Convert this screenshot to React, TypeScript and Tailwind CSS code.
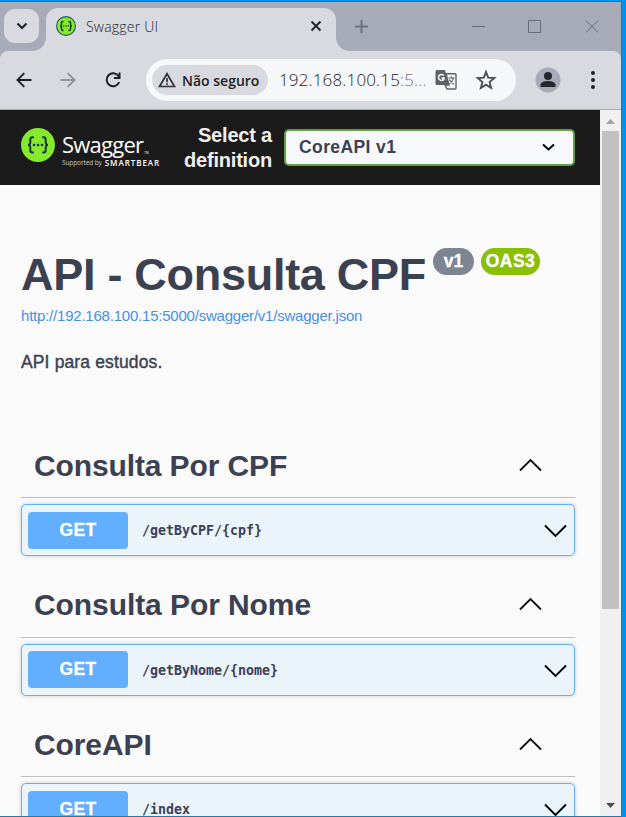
import React from "react";

const sections = [
  { title: "Consulta Por CPF", path: "/getByCPF/{cpf}", spacing: "tracking-[-0.12px]" },
  { title: "Consulta Por Nome", path: "/getByNome/{nome}", spacing: "tracking-[-0.08px]" },
  { title: "CoreAPI", path: "/index", spacing: "tracking-[-0.1px]" },
];

function Braces({ size, ring }: { size: number; ring?: boolean }) {
  return (
    <svg width={size} height={size} viewBox="0 0 34 34" className="shrink-0">
      <circle cx="17" cy="17" r={ring ? 16 : 17} fill="#85ea2d" stroke={ring ? "#2b5b62" : "none"} strokeWidth="2" />
      <g fill="none" stroke="#173647" strokeWidth={ring ? 2.6 : 2}>
        <path d="M12.8 9.2H11.5C9.9 9.2 9.3 10 9.3 11.5V14.3C9.3 16 8.6 16.9 7 16.9C8.6 16.9 9.3 17.8 9.3 19.5V22.3C9.3 23.8 9.9 24.6 11.5 24.6H12.8" />
        <path d="M21.2 9.2H22.5C24.1 9.2 24.7 10 24.7 11.5V14.3C24.7 16 25.4 16.9 27 16.9C25.4 16.9 24.7 17.8 24.7 19.5V22.3C24.7 23.8 24.1 24.6 22.5 24.6H21.2" />
      </g>
      <g fill="#173647">
        <circle cx="13" cy="17" r="1.3" />
        <circle cx="17" cy="17" r="1.3" />
        <circle cx="21" cy="17" r="1.3" />
      </g>
    </svg>
  );
}

function TabStrip() {
  return (
    <div className="flex h-[49px] shrink-0 bg-[#a7abb7]">
      <div className="mt-[7px] ml-1 flex h-[34px] w-[35px] items-center justify-center rounded-[11px] bg-[#d9dadf]">
        <svg width="12" height="8" viewBox="0 0 12 8" fill="none" stroke="#1f2024" strokeWidth="2">
          <path d="M1.5 1.5 6 6l4.5-4.5" />
        </svg>
      </div>
      <svg width="14" height="14" viewBox="0 0 14 14" className="-ml-[7px] self-end">
        <path d="M14 0v14H0C8 14 14 8 14 0Z" fill="#d9dadf" />
      </svg>
      <div className="mt-[6px] flex h-[43px] w-[290px] items-center rounded-t-[12px] bg-[#d9dadf] pb-[7px] pl-[10px]">
        <Braces size={20} ring />
        <span className="ml-[10px] w-[200px] font-['Open_Sans','Liberation_Sans',sans-serif] text-[14px] font-light tracking-[0.22px] text-[#24252a]">
          Swagger UI
        </span>
        <svg width="12" height="12" viewBox="0 0 12 12" className="ml-[24px]" stroke="#1f2024" strokeWidth="1.9">
          <path d="m1.5 1.5 9 9M10.5 1.5l-9 9" />
        </svg>
      </div>
      <svg width="14" height="14" viewBox="0 0 14 14" className="self-end">
        <path d="M0 0v14h14C6 14 0 8 0 0Z" fill="#d9dadf" />
      </svg>
      <svg width="13" height="13" viewBox="0 0 13 13" className="mt-[18px] ml-[5px]" stroke="#6e727c" strokeWidth="2">
        <path d="M6.5 0v13M0 6.5h13" />
      </svg>
      <svg width="128" height="15" viewBox="0 0 128 15" className="mt-[17px] ml-[104px]" fill="none" stroke="#6a6e79">
        <path d="M0 7.5h13M56.5 1.5h12v12h-12zM114 1.5l12 12M126 1.5l-12 12" />
      </svg>
    </div>
  );
}

function Toolbar() {
  return (
    <div className="flex h-[58px] shrink-0 items-center rounded-t-[8px] bg-[#d9dadf] pl-[16px]">
      <svg width="16" height="16" viewBox="0 0 16 16" fill="none" stroke="#1f2024" strokeWidth="1.9">
        <path d="M15.5 8H1.5M8.3 1.2 1.5 8l6.8 6.8" />
      </svg>
      <svg width="16" height="16" viewBox="0 0 16 16" className="ml-[28px]" fill="none" stroke="#909299" strokeWidth="1.9">
        <path d="M.5 8h14M7.7 1.2 14.5 8l-6.8 6.8" />
      </svg>
      <svg width="18" height="18" viewBox="0 0 18 18" className="ml-[28px]" fill="none" stroke="#1f2024" strokeWidth="2">
        <path d="M15.2 11.2A6.5 6.5 0 1 1 14.5 5l1 1.5" />
        <path d="M15.5 1.5v5.5H10" />
      </svg>
      <div className="ml-[24px] flex h-[42px] w-[370px] items-center rounded-full bg-[#f6f7f9] pl-[6px]">
        <div className="flex h-[30px] w-[116px] items-center rounded-full bg-[#d9dadf] pl-[6px]">
          <svg width="18" height="16" viewBox="0 0 18 16" fill="none" stroke="#303136" strokeWidth="1.7">
            <path d="M9 1.7 16.5 14.5h-15zM9 6v4.2M9 11.3v1.7" />
          </svg>
          <span className="ml-[6px] whitespace-nowrap font-['Open_Sans','Liberation_Sans',sans-serif] text-[14px] font-semibold text-[#1f2024]">
            Não seguro
          </span>
        </div>
        <span className="ml-[11px] w-[156px] whitespace-nowrap font-['Open_Sans','Liberation_Sans',sans-serif] text-[17px] font-light tracking-[0.15px] text-[#202127]">
          192.168.100.15<span className="text-[#73757c]">:5...</span>
        </span>
        <svg width="22" height="22" viewBox="0 0 22 22" className="shrink-0">
          <path d="M2 1h8l4 15H2a1.5 1.5 0 0 1-1.5-1.5v-12A1.5 1.5 0 0 1 2 1Z" fill="#5f6167" />
          <path d="M11 4.8h9a1 1 0 0 1 1 1V19a1 1 0 0 1-1 1h-8l-2-4h4z" fill="#f6f7f9" stroke="#5f6167" strokeWidth="1.4" />
          <path d="M8.8 6.5A3 3 0 1 0 9 10V9H6.5" fill="none" stroke="#fff" strokeWidth="1.5" />
          <path d="M13.5 9h6M16.5 7.5V9M18.5 9c-.5 2.5-2 4.5-4 6M14.5 10.5c1 2 2.5 3.5 4.5 5" fill="none" stroke="#5f6167" strokeWidth="1.2" />
        </svg>
        <svg width="22" height="22" viewBox="0 0 22 22" className="ml-[18px]" fill="none" stroke="#4c4e54" strokeWidth="1.9">
          <path d="m11 3 2.2 5.7 6.1.4-4.7 3.9 1.5 6L11 15.7 5.9 19l1.5-6-4.7-3.900 6.1-.4z" />
        </svg>
      </div>
      <svg width="26" height="26" viewBox="0 0 26 26" className="ml-[19px]">
        <circle cx="13" cy="13" r="12.5" fill="#a7abb7" />
        <circle cx="13" cy="9" r="4" fill="#25272d" />
        <path d="M5.5 20v-2.3c0-2.2 4-3.7 7.5-3.7s7.5 1.5 7.5 3.7V20z" fill="#25272d" />
      </svg>
      <svg width="6" height="20" viewBox="0 0 6 20" className="ml-[29px]" fill="#1f2024">
        <circle cx="3" cy="3" r="2" />
        <circle cx="3" cy="10" r="2" />
        <circle cx="3" cy="17" r="2" />
      </svg>
    </div>
  );
}

function Topbar() {
  return (
    <div className="flex h-[75px] shrink-0 items-start bg-[#1b1b1b]">
      <div className="mt-[18px] ml-[21px]">
        <Braces size={34} />
      </div>
      <div className="mt-[20px] ml-[7px] w-[101px] whitespace-nowrap font-['Open_Sans','Liberation_Sans',sans-serif] text-white">
        <div className="flex items-end">
          <span className="text-[22px] leading-[28px] tracking-[-0.75px]">Swagger</span>
          <span className="ml-[1px] mb-[3px] text-[3px] leading-[4px]">TM</span>
        </div>
        <div className="flex items-center leading-[10px]">
          <span className="text-[6.5px] tracking-[-0.1px] text-[#c8c8c8]">Supported by</span>
          <span className="ml-[3px] text-[8px] font-semibold tracking-[0.95px]">SMARTBEAR</span>
        </div>
      </div>
      <div className="mt-[13px] w-[109px] text-right text-[20px] leading-[25px] font-bold tracking-[-0.2px] text-[#f0f0f0]">
        Select a definition
      </div>
      <div className="mt-[19px] ml-[12px] flex h-[37px] w-[291px] items-center rounded-[5px] border-2 border-[#62a03f] bg-[#f7f8fb] pl-[13px] text-[17.5px] font-bold text-[#3b4151]">
        <span className="w-[243px] tracking-[0.4px]">CoreAPI v1</span>
        <svg width="13" height="9" viewBox="0 0 13 9" fill="none" stroke="#000" strokeWidth="2">
          <path d="m1 1.5 5.500 5L12 1.5" />
        </svg>
      </div>
    </div>
  );
}

function Section({ title, path, spacing }: { title: string; path: string; spacing: string }) {
  return (
    <section className="mb-[16.5px]">
      <div className="flex h-[65px] items-center border-b border-[#bdbec0] pl-[13px]">
        <h2 className={`w-[485px] pt-px text-[30px] leading-[36px] font-bold ${spacing}`}>{title}</h2>
        <svg width="23" height="14" viewBox="0 0 23 14" className="mb-px" fill="none" stroke="#111" strokeWidth="1.9">
          <path d="M1 12.5 11.5 2 22 12.5" />
        </svg>
      </div>
      <div className="mt-[6px] flex h-[52px] items-center rounded-[5px] border border-[#61affe] bg-[#ebf3fb] pl-[6px] shadow-[0_0_4px_rgba(0,0,0,0.190)]">
        <span className="flex h-[37px] w-[100px] items-center justify-center rounded-[4px] bg-[#61affe] text-[17.5px] font-bold tracking-[0.3px] text-white [-webkit-text-stroke:0.3px_#fff] [text-shadow:0_1px_0_rgba(0,0,0,0.100)]">
          GET
        </span>
        <code className="ml-[14px] w-[402px] pt-[2px] font-['DejaVu_Sans_Mono','Liberation_Mono',monospace] text-[13.3px] font-bold">{path}</code>
        <svg width="23" height="14" viewBox="0 0 23 14" className="mt-[2px]" fill="none" stroke="#000" strokeWidth="1.9">
          <path d="M1 1.5 11.5 12 22 1.5" />
        </svg>
      </div>
    </section>
  );
}

function Scrollbar() {
  return (
    <div className="flex w-[21px] shrink-0 flex-col items-center bg-[#f0f0f0] pr-px">
      <svg width="9" height="5" viewBox="0 0 9 5" className="mt-[9px]">
        <path d="M0 5 4.5 0 9 5z" fill="#a3a3a3" />
      </svg>
      <div className="mt-[7px] h-[478px] w-[17px] bg-[#c1c1c1]" />
      <svg width="9" height="5" viewBox="0 0 9 5" className="mt-auto mb-[8px]">
        <path d="M0 0h9L4.5 5z" fill="#505050" />
      </svg>
    </div>
  );
}

export default function App() {
  return (
    <div className="h-[817px] w-[626px] overflow-hidden bg-[#0090ef] pt-px font-['Liberation_Sans',Arial,sans-serif]">
      <div className="flex h-[816px] w-[622px] flex-col border-t border-r border-b border-[#2877a8] bg-[#a7abb7]">
        <TabStrip />
        <Toolbar />
        <div className="h-px shrink-0 bg-[#a8aab0]" />
        <div className="flex min-h-0 flex-1">
          <div className="flex w-[600px] shrink-0 flex-col overflow-hidden bg-[#fafafa] text-[#3b4151]">
            <Topbar />
            <main className="pt-[63px] pr-[25px] pl-[21px]">
              <div className="flex h-[54px] items-start whitespace-nowrap">
                <h1 className="w-[412px] text-[45px] leading-[54px] font-bold tracking-[-0.28px]">API - Consulta CPF</h1>
                <span className="flex h-[27px] w-[41px] items-center justify-center rounded-full bg-[#7d8492] text-[17.5px] font-bold text-white [-webkit-text-stroke:0.3px_#fff]">v1</span>
                <span className="ml-[7px] flex h-[27px] w-[59px] items-center justify-center rounded-full bg-[#89bf04] text-[17.5px] font-bold tracking-[0.4px] text-white [-webkit-text-stroke:0.3px_#fff]">OAS3</span>
              </div>
              <a className="mt-[4px] block text-[15px] leading-[20px] tracking-[-0.215px] whitespace-nowrap text-[#4990e2]">
                http://192.168.100.15:5000/swagger/v1/swagger.json
              </a>
              <p className="mt-[24px] mb-[59px] h-[24px] text-[17.5px] leading-[24px] tracking-[0.14px] [-webkit-text-stroke:0.4px_#3b4151]">API para estudos.</p>
              {sections.map((section) => (
                <Section key={section.title} {...section} />
              ))}
            </main>
          </div>
          <Scrollbar />
        </div>
      </div>
    </div>
  );
}
